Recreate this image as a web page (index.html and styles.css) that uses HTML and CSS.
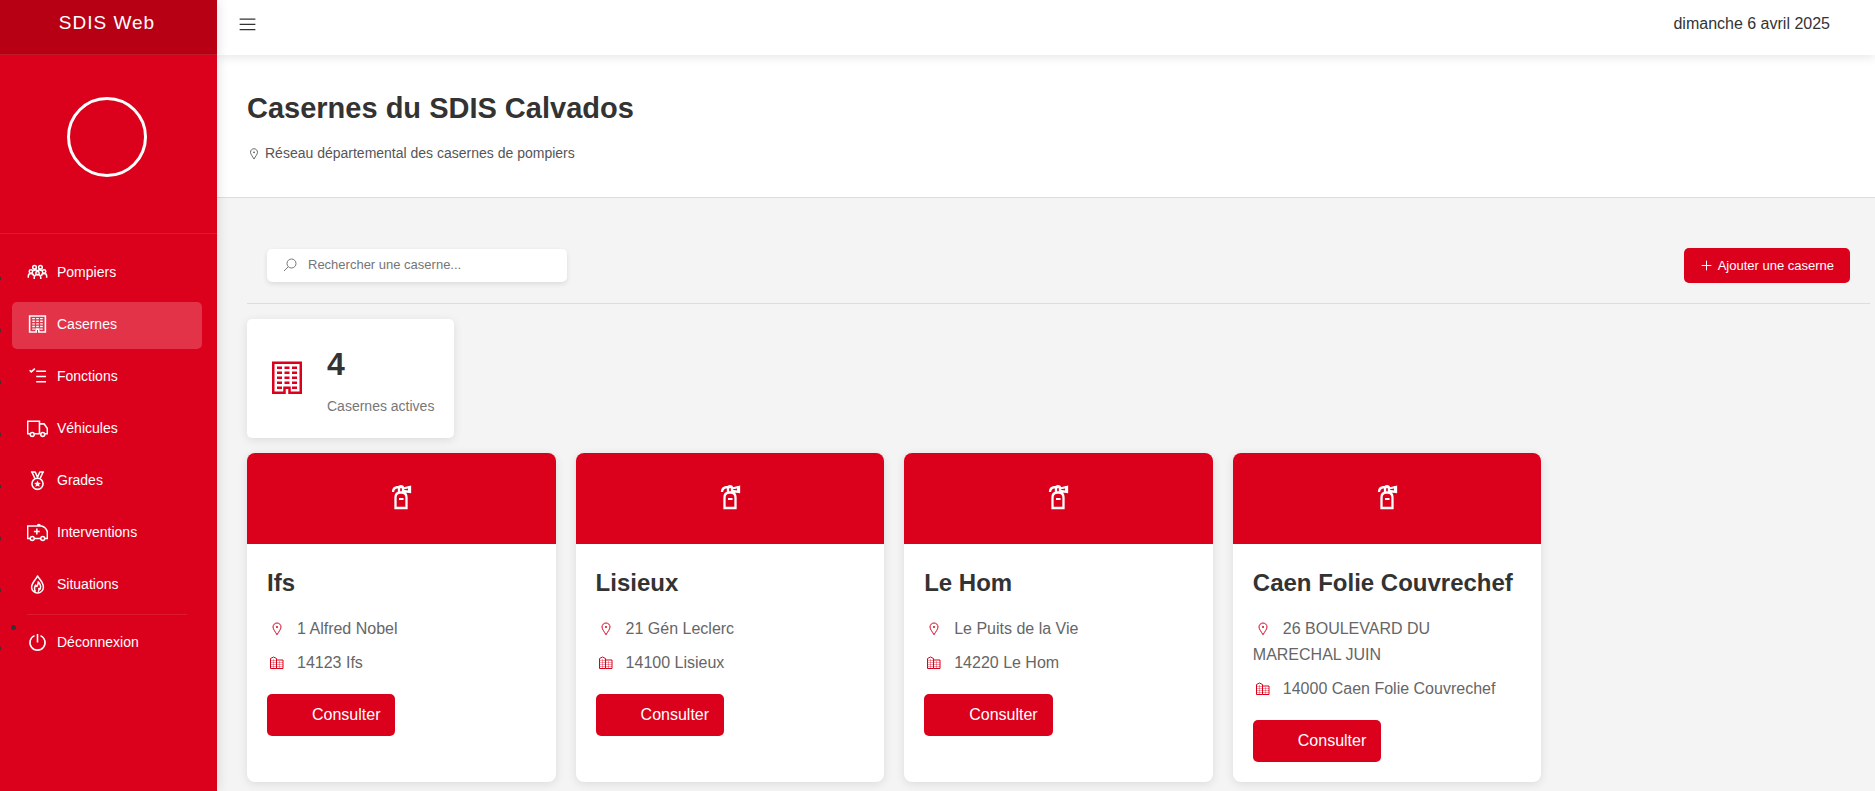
FILE: index.html
```html
<!DOCTYPE html>
<html lang="fr">
<head>
<meta charset="utf-8">
<meta name="viewport" content="width=device-width, initial-scale=1">
<title>SDIS Web - Casernes</title>
<link rel="stylesheet" href="styles.css">
</head>
<body>
<svg class="sprite" aria-hidden="true">
  <symbol id="i-users" viewBox="0 0 32 32"><g fill="none" stroke="currentColor" stroke-width="2.300"><circle cx="11.500" cy="8" r="2.800"/><circle cx="20.500" cy="8" r="2.800"/><circle cx="6" cy="14.500" r="2.600"/><circle cx="16" cy="17" r="2.600"/><circle cx="26" cy="14.500" r="2.600"/><path d="M2 24v-2.500a4 4 0 0 1 8 0M30 24v-2.500a4 4 0 0 0-8 0M11 26v-2a5 5 0 0 1 10 0v2M9.500 13.500c2-2 4-2 6.500 0M22.500 13.500c-2-2-4-2-6.500 0"/></g></symbol>
  <symbol id="i-building" viewBox="0 1 32 32"><path fill="none" stroke="currentColor" stroke-width="2" d="M14 28H5V4h22v24h-9v-4h-4zM8 8h4M14 8h4M20 8h4M8 12h4M14 12h4M20 12h4M8 16h4M14 16h4M20 16h4M8 20h4M14 20h4M20 20h4M8 24h4M20 24h4"/></symbol>
  <symbol id="i-building-bold" viewBox="0 1 32 32"><path fill="none" stroke="currentColor" stroke-width="2.400" d="M14 28.500H4V4h24v24.500H18V24h-4z"/><path fill="none" stroke="currentColor" stroke-width="2" d="M8 8h4M14 8h4M20 8h4M8 12h4M14 12h4M20 12h4M8 16h4M14 16h4M20 16h4M8 20h4M14 20h4M20 20h4M8 24h4M20 24h4"/></symbol>
  <symbol id="i-tasks" viewBox="0 0 32 32"><path fill="none" stroke="currentColor" stroke-width="2.400" d="M4 6.500l2.500 2.500L12 4M14 8h15M14 16h15M14 24h15"/></symbol>
  <symbol id="i-truck" viewBox="0 0 32 32"><g fill="none" stroke="currentColor" stroke-width="2.400"><path d="M5 24H1V5h18v19h-8M19 9h7l5 7v8h-4M21 24h-2"/><circle cx="8" cy="25" r="3"/><circle cx="24" cy="25" r="3"/></g></symbol>
  <symbol id="i-medal" viewBox="0 0 32 32"><g fill="none" stroke="currentColor" stroke-width="2.400"><path d="M7.500 3l4.500 10M24.500 3L20 13M12.500 3L16 11l3.500-8M6 3h7M19 3h7"/><circle cx="16" cy="21" r="8.500"/></g><path fill="currentColor" d="M16 16l1.500 3.300 3.600.4-2.700 2.400.8 3.600-3.200-1.800-3.200 1.800.8-3.600-2.700-2.400 3.600-.4z"/></symbol>
  <symbol id="i-ambulance" viewBox="0 0 32 32"><g fill="none" stroke="currentColor" stroke-width="2.300"><path d="M5 25H1V6h21c4 1 8 5 9 9v10h-4M11 25h10M16 6c0-3 4-3 4 0M15 10v9M10.500 14.500h9"/><circle cx="8" cy="25" r="3"/><circle cx="24" cy="25" r="3"/></g></symbol>
  <symbol id="i-fire" viewBox="0 0 32 32"><path fill="none" stroke="currentColor" stroke-width="2.300" stroke-linejoin="round" d="M16 3c-2 5-9 10-9 17 0 5 4 9 9 9s9-4 9-9c0-7-6-12-9-17zM13 27c-3-4-1-8 0-10l2 2c2-2 2-4 2-7 3 3 5 7 3 11l-2-1c1 2 0 4-1 5"/></symbol>
  <symbol id="i-power" viewBox="0 0 32 32"><path fill="none" stroke="currentColor" stroke-width="2.400" d="M16 3v13M11.500 5.500a11.500 11.500 0 1 0 9 0"/></symbol>
  <symbol id="i-bars" viewBox="0 0 32 32"><path fill="currentColor" d="M4 7h24v1.600H4zM4 15h24v1.600H4zM4 23h24v1.600H4z"/></symbol>
  <symbol id="i-pin" viewBox="0 0 32 32"><path fill="none" stroke="currentColor" stroke-width="2" d="M16 4c-4.500 0-8 3.500-8 8 0 4.500 4.500 9 8 15.500 3.500-6.500 8-11 8-15.500 0-4.500-3.500-8-8-8z"/><circle cx="16" cy="12" r="2" fill="currentColor"/></symbol>
  <symbol id="i-search" viewBox="0 0 32 32"><g fill="none" stroke="currentColor" stroke-width="2"><circle cx="19" cy="13" r="9"/><path d="M12.500 19.500L4 28"/></g></symbol>
  <symbol id="i-plus" viewBox="0 0 32 32"><path fill="none" stroke="currentColor" stroke-width="2.400" d="M16 4v24M4 16h24"/></symbol>
  <symbol id="i-extinguisher" viewBox="0 1 32 32"><path fill="none" stroke="currentColor" stroke-width="2.300" d="M10.500 26V15.500c0-3 2-5 5-5h1c3 0 5 2 5 5V26zM8 10c0-3 2-5 6-5h3M14 10.500V6c0-2.500 4-2.500 4 0v4.500M18 6.500l7-1.500v5l-7-1"/><path fill="currentColor" d="M14 16h4.500v2H14zM23 4h3v7l-3-1z"/></symbol>
  <symbol id="i-city" viewBox="0 0 32 32"><path fill="none" stroke="currentColor" stroke-width="2" d="M15 27H3V7l6-3 6 3zM15 10h13v17H15"/><path fill="none" stroke="currentColor" stroke-width="1.500" opacity=".5" d="M3 11h12M3 15h25M3 19h25M3 23h25M9 8v18M21 12v14"/></symbol>
</svg>
<div class="layout">
  <aside class="sidebar">
    <div class="brand">SDIS Web</div>
    <div class="profile"><div class="avatar"></div></div>
    <nav aria-label="Menu principal">
      <ul class="menu">
        <li class="menu-item"><a class="menu-link" href="#pompiers"><svg class="menu-icon"><use href="#i-users"/></svg>Pompiers</a></li>
        <li class="menu-item"><a class="menu-link active" href="#casernes" aria-current="page"><svg class="menu-icon"><use href="#i-building-bold"/></svg>Casernes</a></li>
        <li class="menu-item"><a class="menu-link" href="#fonctions"><svg class="menu-icon"><use href="#i-tasks"/></svg>Fonctions</a></li>
        <li class="menu-item"><a class="menu-link" href="#vehicules"><svg class="menu-icon"><use href="#i-truck"/></svg>Véhicules</a></li>
        <li class="menu-item"><a class="menu-link" href="#grades"><svg class="menu-icon"><use href="#i-medal"/></svg>Grades</a></li>
        <li class="menu-item"><a class="menu-link" href="#interventions"><svg class="menu-icon"><use href="#i-ambulance"/></svg>Interventions</a></li>
        <li class="menu-item"><a class="menu-link" href="#situations"><svg class="menu-icon"><use href="#i-fire"/></svg>Situations</a></li>
        <li class="menu-divider"></li>
        <li class="menu-item"><a class="menu-link" href="#deconnexion"><svg class="menu-icon"><use href="#i-power"/></svg>Déconnexion</a></li>
      </ul>
    </nav>
  </aside>
  <div class="page">
    <header class="topbar">
      <button class="toggle" type="button" aria-label="Menu"><svg class="toggle-icon"><use href="#i-bars"/></svg></button>
      <span class="date">dimanche 6 avril 2025</span>
    </header>
    <section class="page-header">
      <h1 class="page-title">Casernes du SDIS Calvados</h1>
      <p class="page-subtitle"><svg class="subtitle-icon"><use href="#i-pin"/></svg>Réseau départemental des casernes de pompiers</p>
    </section>
    <main class="content">
      <div class="toolbar">
        <label class="search"><svg class="search-icon"><use href="#i-search"/></svg><input class="search-input" type="text" aria-label="Rechercher une caserne" placeholder="Rechercher une caserne..."></label>
        <button class="add" type="button"><svg class="add-icon"><use href="#i-plus"/></svg>Ajouter une caserne</button>
      </div>
      <div class="stat">
        <svg class="stat-icon"><use href="#i-building"/></svg>
        <div>
          <div class="stat-value">4</div>
          <div class="stat-label">Casernes actives</div>
        </div>
      </div>
      <div class="grid">
        <article class="card">
          <div class="card-top"><svg class="card-icon"><use href="#i-extinguisher"/></svg></div>
          <div class="card-body">
            <h2 class="card-title">Ifs</h2>
            <p class="info"><svg class="info-icon"><use href="#i-pin"/></svg>1 Alfred Nobel</p>
            <p class="info"><svg class="info-icon"><use href="#i-city"/></svg>14123 Ifs</p>
            <a class="consult" href="#ifs">Consulter</a>
          </div>
        </article>
        <article class="card">
          <div class="card-top"><svg class="card-icon"><use href="#i-extinguisher"/></svg></div>
          <div class="card-body">
            <h2 class="card-title">Lisieux</h2>
            <p class="info"><svg class="info-icon"><use href="#i-pin"/></svg>21 Gén Leclerc</p>
            <p class="info"><svg class="info-icon"><use href="#i-city"/></svg>14100 Lisieux</p>
            <a class="consult" href="#lisieux">Consulter</a>
          </div>
        </article>
        <article class="card">
          <div class="card-top"><svg class="card-icon"><use href="#i-extinguisher"/></svg></div>
          <div class="card-body">
            <h2 class="card-title">Le Hom</h2>
            <p class="info"><svg class="info-icon"><use href="#i-pin"/></svg>Le Puits de la Vie</p>
            <p class="info"><svg class="info-icon"><use href="#i-city"/></svg>14220 Le Hom</p>
            <a class="consult" href="#le-hom">Consulter</a>
          </div>
        </article>
        <article class="card">
          <div class="card-top"><svg class="card-icon"><use href="#i-extinguisher"/></svg></div>
          <div class="card-body">
            <h2 class="card-title">Caen Folie Couvrechef</h2>
            <p class="info"><svg class="info-icon"><use href="#i-pin"/></svg>26 BOULEVARD DU MARECHAL JUIN</p>
            <p class="info"><svg class="info-icon"><use href="#i-city"/></svg>14000 Caen Folie Couvrechef</p>
            <a class="consult" href="#caen">Consulter</a>
          </div>
        </article>
      </div>
    </main>
  </div>
</div>
</body>
</html>
```

FILE: styles.css
```css
:root {
  --red: #db001b;
  --red-dark: #b80015;
  --text: #333;
  --muted: #666;
  --line: #ddd;
}

* {
  box-sizing: border-box;
  margin: 0;
}

body {
  background: #f4f4f4;
  color: var(--text);
  font: 16px/26px "Liberation Sans", Arial, sans-serif;
}

.sprite {
  display: none;
}

.layout {
  display: flex;
  min-height: 100vh;
}

/* Sidebar */
.sidebar {
  flex: 0 0 217px;
  background: var(--red);
  box-shadow: 2px 0 10px rgba(0, 0, 0, 0.1);
  z-index: 2;
}

.brand {
  padding: 8px 3px 16px 0;
  border-bottom: 1px solid rgba(255, 255, 255, 0.1);
  background: var(--red-dark);
  color: #fff;
  font-size: 19px;
  line-height: 30px;
  letter-spacing: 1px;
  text-align: center;
}

.profile {
  display: flex;
  justify-content: center;
  padding: 42px 3px 56px 0;
  border-bottom: 1px solid rgba(255, 255, 255, 0.1);
}

.avatar {
  width: 80px;
  height: 80px;
  border: 3px solid #fff;
  border-radius: 50%;
}

.menu {
  padding: 16px 15px 16px 12px;
}

.menu-item {
  margin-bottom: 5px;
}

.menu-link {
  display: flex;
  align-items: center;
  gap: 9px;
  height: 47px;
  padding: 0 15px 3px;
  border-radius: 5px;
  color: #fff;
  font-size: 14px;
  text-decoration: none;
}

.menu-link.active {
  background: rgba(255, 255, 255, 0.2);
}

.menu-icon {
  width: 21px;
  height: 21px;
}

.menu-divider {
  height: 1px;
  margin: 5px 15px;
  background: rgba(255, 255, 255, 0.1);
}

/* Top bar and page heading */
.page {
  flex: 1;
  min-width: 0;
}

.topbar {
  position: relative;
  display: flex;
  align-items: center;
  justify-content: space-between;
  padding: 11px 45px 18px 20px;
  background: #fff;
  box-shadow: 0 2px 10px rgba(0, 0, 0, 0.1);
}

.toggle {
  display: flex;
  padding: 0;
  border: 0;
  background: none;
  color: var(--text);
}

.toggle-icon {
  width: 21px;
  height: 21px;
}

.page-header {
  padding: 30px 30px 32px;
  border-bottom: 1px solid var(--line);
  background: #fff;
}

.page-title {
  margin-bottom: 11px;
  font-size: 29px;
  line-height: 46px;
}

.page-subtitle {
  display: flex;
  align-items: center;
  gap: 4px;
  color: #555;
  font-size: 14px;
  line-height: 23px;
}

.subtitle-icon {
  width: 14px;
  height: 14px;
}

/* Content */
.content {
  padding: 30px 5px 8px 30px;
}

.toolbar {
  display: flex;
  align-items: center;
  justify-content: space-between;
  margin-bottom: 15px;
  padding: 20px;
  border-bottom: 1px solid var(--line);
}

.search {
  display: flex;
  align-items: center;
  gap: 10px;
  width: 300px;
  height: 33px;
  padding: 0 15px 2px;
  border-radius: 5px;
  background: #fff;
  box-shadow: 0 2px 5px rgba(0, 0, 0, 0.1);
  color: #777;
}

.search-icon {
  width: 16px;
  height: 16px;
}

.search-input {
  flex: 1;
  min-width: 0;
  padding: 0;
  border: 0;
  outline: 0;
  background: none;
  color: var(--text);
  font: inherit;
  font-size: 13px;
}

.search-input::placeholder {
  color: #757575;
}

.add {
  display: flex;
  align-items: center;
  gap: 5px;
  height: 35px;
  padding: 0 16px;
  border: 0;
  border-radius: 5px;
  background: var(--red);
  color: #fff;
  font: inherit;
  font-size: 13px;
}

.add-icon {
  width: 13px;
  height: 13px;
}

.stat {
  display: flex;
  align-items: center;
  gap: 20px;
  width: fit-content;
  margin-bottom: 15px;
  padding: 20px;
  border-radius: 5px;
  background: #fff;
  box-shadow: 0 2px 10px rgba(0, 0, 0, 0.1);
}

.stat-icon {
  width: 40px;
  height: 40px;
  color: var(--red);
}

.stat-value {
  margin-bottom: 5px;
  font-size: 32px;
  font-weight: bold;
  line-height: 51px;
}

.stat-label {
  color: #777;
  font-size: 14px;
  line-height: 23px;
}

.grid {
  display: grid;
  grid-template-columns: repeat(auto-fill, minmax(300px, 1fr));
  gap: 20px;
}

.card {
  border-radius: 8px;
  background: #fff;
  box-shadow: 0 2px 10px rgba(0, 0, 0, 0.1);
  overflow: hidden;
}

.card-top {
  display: flex;
  align-items: center;
  justify-content: center;
  height: 91px;
  background: var(--red);
  color: #fff;
}

.card-icon {
  width: 32px;
  height: 32px;
}

.card-body {
  padding: 20px;
}

.card-title {
  margin-bottom: 14px;
  font-size: 24px;
  line-height: 38px;
}

.info {
  margin-bottom: 8px;
  color: var(--muted);
}

.info-icon {
  width: 20px;
  height: 16px;
  margin-right: 10px;
  color: var(--red);
  vertical-align: -3px;
}

.consult {
  display: block;
  width: fit-content;
  margin-top: 18px;
  padding: 8px 15px 8px 45px;
  border-radius: 5px;
  background: var(--red);
  color: #fff;
  text-decoration: none;
}
```
